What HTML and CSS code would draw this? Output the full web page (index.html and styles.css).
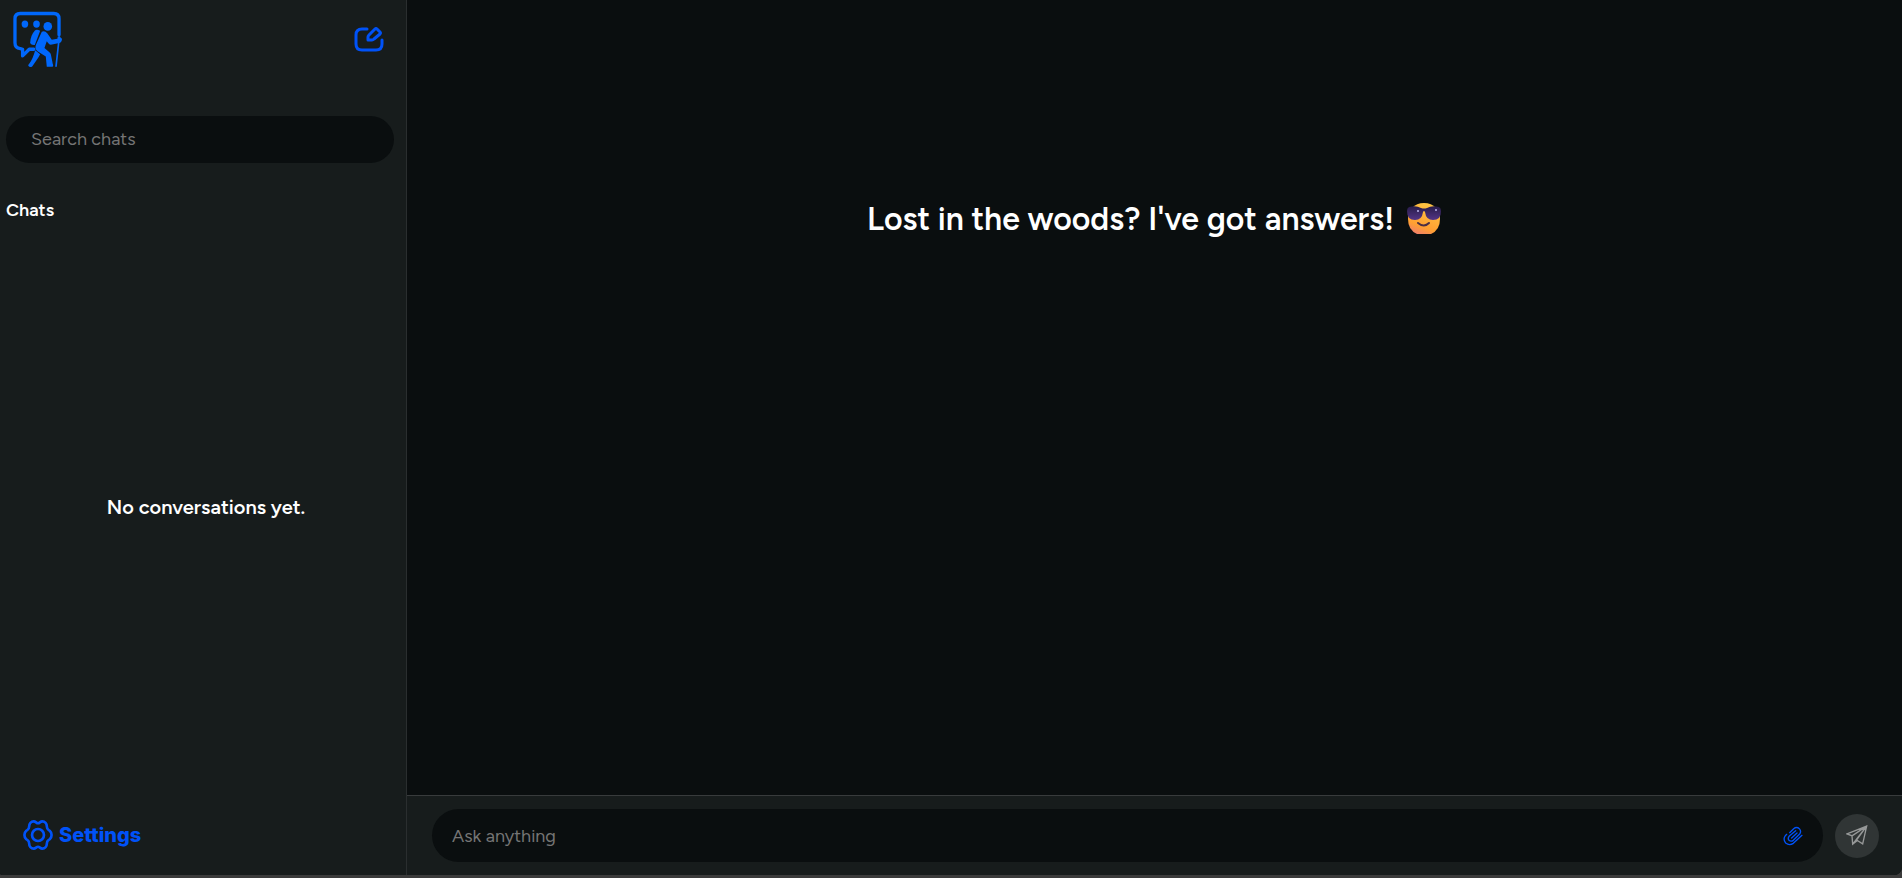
FILE: index.html
```html
<!DOCTYPE html>
<html lang="en">
<head>
<meta charset="utf-8">
<meta name="viewport" content="width=device-width, initial-scale=1">
<title>Chat</title>
<link rel="stylesheet" href="styles.css">
</head>
<body>
<div class="app">
  <aside class="sidebar">
    <header class="sidebar-header">
      <svg class="logo" viewBox="32 30 160 180" role="img" aria-label="Home">
        <path class="logo-line" d="M177 104V56q0-16-16-16H60q-16 0-16 16v72q0 16 16 18l7 2v20l20-20h14"/>
        <ellipse cx="74" cy="72" rx="10" ry="11"/><ellipse cx="109" cy="72" rx="10" ry="11"/><circle cx="143" cy="79" r="13"/>
        <path d="M104 91q6-4 16 1l-16 43q-14 1-14-8 1-21 14-36z"/>
        <path d="M125 95q9-4 17 5l13 19 17-3 1-6q7-5 9 3l4 3q0 10-8 13l-26 5q-5 0-8-5l-4-5-7 20 15 13q5 4 5 10l5 25q3 5 0 9h-18l-3-31-25-16q-9-7-5-19z"/>
        <path d="M105 151l15 12q-4 9-11 18l-13 19q-7 4-12-2 0-4 4-8 10-13 17-39z"/>
        <path class="logo-stick" d="M176 127l-8 72"/>
      </svg>
      <button class="icon-button" type="button" aria-label="New chat">
        <svg class="compose" viewBox="0 0 30 30">
          <path d="M13 4H8Q2 4 2 10v9q0 6 6 6h14q6 0 6-6v-4"/>
          <path d="M14 15v-3q0-1 1-2l6-6q1-1 2 0l3 3q1 1 0 2l-6 5q-1 1-2 1z"/>
        </svg>
      </button>
    </header>
    <input class="search" type="search" placeholder="Search chats" aria-label="Search chats">
    <h2 class="list-title">Chats</h2>
    <p class="empty">No conversations yet.</p>
    <button class="settings" type="button">
      <svg class="gear" viewBox="0 0 300 300">
        <path d="M150 40C165 40 172 22 190 22C215 22 233 45 233 70C233 100 243 98 260 110C283 130 283 170 260 190C243 202 233 200 233 230C233 255 215 278 190 278C172 278 165 260 150 260C135 260 128 278 110 278C85 278 67 255 67 230C67 200 57 202 40 190C17 170 17 130 40 110C57 98 67 100 67 70C67 45 85 22 110 22C128 22 135 40 150 40Z"/>
        <circle cx="150" cy="150" r="56"/>
      </svg>
      Settings
    </button>
  </aside>
  <main class="main">
    <section class="welcome">
      <h1 class="headline">Lost in the woods? I've got answers!
        <svg class="emoji" viewBox="0 0 36 36" role="img" aria-label="Cool face">
          <defs>
            <linearGradient id="face" x1=".7" y1="0" x2=".3" y2="1"><stop offset="0" stop-color="#ffc843"/><stop offset=".75" stop-color="#ff9f32"/><stop offset="1" stop-color="#f08068"/></linearGradient>
            <linearGradient id="lens" x1="0" y1="0" x2="0" y2="1"><stop offset="0" stop-color="#271c49"/><stop offset="1" stop-color="#543586"/></linearGradient>
          </defs>
          <path fill="url(#face)" d="M18 2C8 2 2 9 2 18q0 11 9 15h14q9-4 9-15C34 9 28 2 18 2z"/>
          <path fill="url(#lens)" d="M3 6q7-2 12 1 3 1 6 0 5-3 12-1 2 1 2 4 0 9-8 9-7 0-8-8-1-2-2 0-1 8-8 8-8 0-8-9 0-3 2-4z"/>
          <circle cx="12" cy="10" r="1" fill="#bdb6ec"/><circle cx="30" cy="9" r="1" fill="#bdb6ec"/>
          <path class="smile" d="M12 22q6 5 11 0"/>
        </svg>
      </h1>
    </section>
    <form class="composer">
      <div class="prompt">
        <input class="prompt-input" type="text" placeholder="Ask anything" aria-label="Ask anything">
        <button class="icon-button" type="button" aria-label="Attach a file">
          <svg class="clip" viewBox="0 0 60 60">
            <path d="M20 20L32 8q9-7 17 0 7 8 1 16L31 43q-7 5-13 0-5-6 1-13L38 14"/>
            <path d="M57 28L31 52q-12 8-23-1-9-11-1-22l4-4M26 36l16-15"/>
          </svg>
        </button>
      </div>
      <button class="send" type="button" aria-label="Send">
        <svg class="plane" viewBox="0 0 66 62">
          <path d="M3 26L62 3 50 56 34 46 20 57 18 32zM18 32L62 3 20 57M62 3L32 44"/>
        </svg>
      </button>
    </form>
  </main>
</div>
</body>
</html>
```
FILE: styles.css
```css
* { box-sizing: border-box; }
body {
  margin: 0;
  background: #3b3b3b;
  color: #fff;
  font-family: Figtree, Lato, sans-serif;
}
button, input { font: inherit; border: 0; }
button { padding: 0; background: none; cursor: pointer; }
svg { display: block; fill: none; stroke-linecap: round; stroke-linejoin: round; }

.app {
  display: flex;
  height: calc(100vh - 3px);
  overflow: hidden;
  border-radius: 0 0 8px 2px;
  background: #0a0e0f;
}
.sidebar {
  display: flex;
  flex-direction: column;
  flex: 0 0 407px;
  padding: 0 12px 0 6px;
  border-right: 1px solid #2a2e2f;
  background: #171c1c;
}
.sidebar-header {
  display: flex;
  justify-content: space-between;
  align-items: center;
  height: 80px;
  margin-bottom: 36px;
  padding: 0 10px 0 5px;
}
.logo { width: 53px; height: 60px; fill: #0067fb; }
.logo-line { fill: none; stroke: #0067fb; stroke-width: 10; }
.logo-stick { stroke: #0067fb; stroke-width: 5; }
.icon-button { flex: none; }
.compose { width: 30px; height: 30px; stroke: #0052f8; stroke-width: 3; }

.search {
  width: 100%;
  height: 47px;
  padding: 0 25px 2px;
  border-radius: 24px;
  background: #0a0e0f;
  color: #fff;
  font-size: 18px;
}
.search::placeholder, .prompt-input::placeholder { color: #757575; opacity: 1; }
.list-title { margin: 36px 0 0; font-size: 18px; line-height: 22px; font-weight: 600; }
.empty {
  display: flex;
  flex: 1;
  align-items: center;
  justify-content: center;
  margin: 0;
  padding: 0 0 26px 12px;
  font-size: 20px;
  line-height: 24px;
  font-weight: 600;
}
.settings {
  display: flex;
  align-items: center;
  align-self: flex-start;
  gap: 5px;
  margin: 0 0 24px 16px;
  color: #0052f8;
  font-family: Inter, sans-serif;
  font-size: 20px;
  line-height: 30px;
  font-weight: 800;
}
.gear { width: 32px; height: 32px; stroke: #0052f8; stroke-width: 25; }

.main { display: flex; flex: 1; flex-direction: column; min-width: 0; }
.welcome { flex: 1; padding: 200px 24px 0; }
.headline {
  display: flex;
  align-items: center;
  justify-content: center;
  gap: 12px;
  margin: 0;
  font-size: 32px;
  line-height: 38px;
  font-weight: 600;
}
.emoji { width: 36px; height: 36px; }
.smile { stroke: #4b2f45; stroke-width: 2; }

.composer {
  display: flex;
  align-items: center;
  gap: 12px;
  padding: 13px 23px 13px 25px;
  border-top: 1px solid #383b3c;
  background: #171c1c;
}
.prompt {
  display: flex;
  flex: 1;
  align-items: center;
  height: 53px;
  padding: 0 20px;
  border-radius: 27px;
  background: #0a0e0f;
}
.prompt-input {
  flex: 1;
  min-width: 0;
  height: 100%;
  padding: 0;
  outline: 0;
  background: none;
  color: #fff;
  font-size: 18px;
}
.clip { width: 20px; height: 20px; stroke: #0052f8; stroke-width: 4; }
.send {
  display: grid;
  place-items: center;
  width: 44px;
  height: 44px;
  border-radius: 50%;
  background: #303535;
}
.plane { width: 22px; height: 21px; stroke: #969898; stroke-width: 4; stroke-linejoin: miter; }
```
